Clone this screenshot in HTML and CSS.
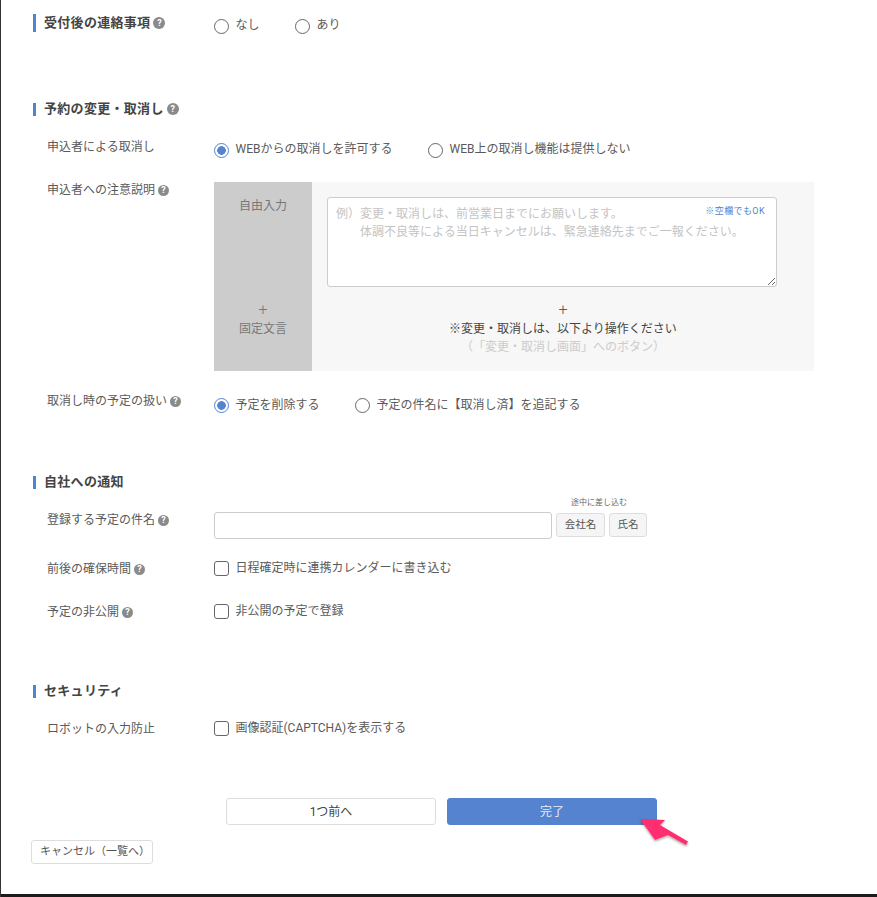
FILE: index.html
```html
<!DOCTYPE html>
<html lang="ja">
<head>
<meta charset="utf-8">
<title>予約フォーム設定</title>
<link rel="stylesheet" href="styles.css">
</head>
<body>
<div class="page">
  <main class="main">
    <section class="section section-first">
      <div class="row-heading">
        <h2 class="heading heading-tall">受付後の連絡事項<span class="help">?</span></h2>
        <div class="options options-inline">
          <label class="option option-narrow"><input class="radio" type="radio" name="contact"><span>なし</span></label>
          <label class="option"><input class="radio" type="radio" name="contact"><span>あり</span></label>
        </div>
      </div>
    </section>

    <section class="section section-cancel">
      <h2 class="heading">予約の変更・取消し<span class="help">?</span></h2>
      <div class="row">
        <div class="label">申込者による取消し</div>
        <div class="options">
          <label class="option option-wide"><input class="radio" type="radio" name="cancel" checked><span>WEBからの取消しを許可する</span></label>
          <label class="option"><input class="radio" type="radio" name="cancel"><span>WEB上の取消し機能は提供しない</span></label>
        </div>
      </div>
      <div class="row row-panel">
        <div class="label">申込者への注意説明<span class="help">?</span></div>
        <div class="panel">
          <div class="panel-side">自由入力</div>
          <div class="panel-main panel-editor">
            <div class="editor">
              <textarea class="textarea" placeholder="例）変更・取消しは、前営業日までにお願いします。&#10;　　体調不良等による当日キャンセルは、緊急連絡先までご一報ください。"></textarea>
              <span class="note">※空欄でもOK</span>
            </div>
          </div>
          <div class="panel-side panel-side-fixed"><span class="plus">+</span>固定文言</div>
          <div class="panel-main panel-fixed">
            <span class="plus">+</span>
            <span class="fixed-text">※変更・取消しは、以下より操作ください</span>
            <span class="fixed-muted">（「変更・取消し画面」へのボタン）</span>
          </div>
        </div>
      </div>
      <div class="row">
        <div class="label">取消し時の予定の扱い<span class="help">?</span></div>
        <div class="options options-low">
          <label class="option option-mid"><input class="radio" type="radio" name="event" checked><span>予定を削除する</span></label>
          <label class="option"><input class="radio" type="radio" name="event"><span>予定の件名に【取消し済】を追記する</span></label>
        </div>
      </div>
    </section>

    <section class="section section-notice">
      <h2 class="heading">自社への通知</h2>
      <div class="row row-title">
        <div class="label">登録する予定の件名<span class="help">?</span></div>
        <div class="title-field">
          <input class="text-input" type="text">
          <div class="inserts">
            <span class="insert-hint">途中に差し込む</span>
            <button class="insert insert-company" type="button">会社名</button>
            <button class="insert insert-name" type="button">氏名</button>
          </div>
        </div>
      </div>
      <div class="row">
        <div class="label">前後の確保時間<span class="help">?</span></div>
        <label class="check"><input class="checkbox" type="checkbox"><span>日程確定時に連携カレンダーに書き込む</span></label>
      </div>
      <div class="row">
        <div class="label">予定の非公開<span class="help">?</span></div>
        <label class="check"><input class="checkbox" type="checkbox"><span>非公開の予定で登録</span></label>
      </div>
    </section>

    <section class="section section-security">
      <h2 class="heading">セキュリティ</h2>
      <div class="row">
        <div class="label">ロボットの入力防止</div>
        <label class="check"><input class="checkbox" type="checkbox"><span>画像認証(CAPTCHA)を表示する</span></label>
      </div>
    </section>

    <div class="actions">
      <button class="btn" type="button">1つ前へ</button>
      <button class="btn btn-primary" type="button">完了</button>
    </div>
    <button class="cancel" type="button">キャンセル（一覧へ）</button>
  </main>
  <div class="bottom-bar"></div>
  <svg class="arrow" width="60" height="40" viewBox="0 0 60 40" aria-hidden="true">
    <defs>
      <filter id="arrow-shadow" x="-20%" y="-20%" width="140%" height="150%">
        <feDropShadow dx="0" dy="1.5" stdDeviation="1.2" flood-color="#000" flood-opacity="0.35"/>
      </filter>
    </defs>
    <path d="M2 2 L27 3 L22 8 L50 24.500 L48 28 L30 18 L17 23 Z" fill="#ff2d6f" filter="url(#arrow-shadow)"/>
  </svg>
</div>
</body>
</html>
```

FILE: styles.css
```css
* {
  box-sizing: border-box;
}

html,
body {
  margin: 0;
  height: 100%;
}

body {
  background: #fff;
  color: #5a5a5a;
  font-family: Roboto, "Noto Sans CJK JP", sans-serif;
  font-size: 12px;
  line-height: 18px;
  overflow: hidden;
  text-spacing-trim: space-all;
}

.page {
  position: relative;
  display: flex;
  flex-direction: column;
  height: 897px;
  border-left: 1px solid #333;
}

.main {
  flex: 1;
  padding: 14px 0 0 32px;
}

.bottom-bar {
  height: 3px;
  background: #1c1c1c;
}

.section-cancel {
  margin-top: 66px;
}

.section-notice {
  margin-top: 39px;
}

.section-security {
  margin-top: 37px;
}

.row-heading {
  display: flex;
}

.heading {
  position: relative;
  display: flex;
  align-items: center;
  margin: 0 0 19px;
  height: 18px;
  padding-left: 11px;
  font-size: 13px;
  font-weight: 700;
  color: #444;
  letter-spacing: 0.3px;
}

.heading::before {
  content: "";
  position: absolute;
  left: 0;
  top: 3px;
  width: 3px;
  height: 13px;
  background: #4d86d0;
}

.heading-tall {
  width: 181px;
  margin-bottom: 0;
}

.heading-tall::before {
  top: 0;
  height: 18px;
}

.help {
  display: inline-block;
  flex: none;
  width: 11px;
  height: 11px;
  margin-left: 3px;
  border-radius: 50%;
  background: #8a8a8a;
  color: #fff;
  font-size: 9px;
  font-weight: 700;
  line-height: 11px;
  text-align: center;
  letter-spacing: 0;
  vertical-align: 1px;
}

.heading .help {
  width: 12px;
  height: 12px;
  line-height: 12px;
}

.row {
  display: flex;
  min-height: 43px;
}

.row-panel {
  margin-bottom: 20px;
}

.row-title {
  min-height: 49px;
}

.label {
  flex: none;
  width: 181px;
  padding-left: 14px;
  padding-top: 1px;
}

.options {
  display: flex;
  padding-top: 3px;
}

.options-inline {
  padding-top: 2px;
}

.options-low {
  padding-top: 4px;
}

.option,
.check {
  display: flex;
  align-items: flex-start;
  gap: 6.500px;
  cursor: pointer;
}

.option-narrow {
  width: 81px;
}

.option-wide {
  width: 214px;
}

.option-mid {
  width: 141px;
}

.options-low span {
  margin-top: 1px;
}

.check {
  align-self: flex-start;
  margin-top: -1px;
}

.check span {
  margin-top: 1px;
}

.radio,
.checkbox {
  appearance: none;
  flex: none;
  width: 15px;
  height: 15px;
  margin: 3px 0 0;
  background: #fff;
  border: 1px solid #666;
}

.radio {
  border-radius: 50%;
}

.radio:checked {
  border-color: #5583cf;
  background: radial-gradient(circle, #5583cf 0, #5583cf 4px, #fff 4.6px);
}

.checkbox {
  border-radius: 3px;
}

.panel {
  display: grid;
  grid-template-columns: 98px 502px;
  grid-template-rows: 119px 70px;
  margin-top: 2px;
  align-self: flex-start;
  background: #f7f7f7;
}

.panel-side {
  padding-top: 15px;
  background: #ccc;
  color: #777;
  text-align: center;
}

.panel-side-fixed {
  display: flex;
  flex-direction: column;
  padding-top: 1px;
}

.panel-main {
  padding: 15px;
}

.panel-fixed {
  display: flex;
  flex-direction: column;
  align-items: center;
  padding: 1px 0 0;
}

.editor {
  position: relative;
  width: 450px;
  height: 90px;
}

.textarea {
  display: block;
  width: 450px;
  height: 90px;
  padding: 7px 8px;
  border: 1px solid #ccc;
  border-radius: 3px;
  background: #fff;
  color: #555;
  font: inherit;
  line-height: 18px;
  resize: both;
  outline: none;
}

.textarea::placeholder {
  color: #c4c4c4;
  opacity: 1;
}

.note {
  position: absolute;
  top: 5px;
  right: 12px;
  color: #5583cf;
  font-size: 9px;
  line-height: 18px;
  letter-spacing: 0.4px;
}

.plus {
  margin: -1px 0 1px;
  font-size: 16px;
  font-weight: 300;
}

.fixed-text {
  color: #444;
}

.fixed-muted {
  color: #ccc;
}

.title-field {
  display: flex;
  align-items: flex-start;
  gap: 4px;
  margin-top: 2px;
}

.text-input {
  width: 338px;
  height: 27px;
  border: 1px solid #ccc;
  border-radius: 3px;
  background: #fff;
  outline: none;
}

.inserts {
  position: relative;
  display: flex;
  gap: 4px;
  margin-top: 1px;
}

.insert-hint {
  position: absolute;
  top: -16px;
  left: 15px;
  color: #666;
  font-size: 8px;
  line-height: 12px;
  white-space: nowrap;
}

.insert {
  height: 24px;
  padding: 0;
  border: 1px solid #ddd;
  border-radius: 3px;
  background: #f5f5f5;
  color: #555;
  font: inherit;
  font-size: 10.500px;
}

.insert-company {
  width: 49px;
}

.insert-name {
  width: 38px;
}

.actions {
  display: flex;
  gap: 11px;
  margin-top: 36px;
  padding-left: 193px;
}

.btn {
  width: 210px;
  height: 27px;
  padding: 0;
  border: 1px solid #ddd;
  border-radius: 3px;
  background: #fff;
  color: #444;
  font: inherit;
}

.btn-primary {
  border-color: #5583cf;
  background: #5583cf;
  color: #e6edf9;
}

.cancel {
  display: block;
  width: 122px;
  height: 24px;
  margin: 15px 0 0 -2px;
  padding: 0 0 0 8px;
  border: 1px solid #ddd;
  border-radius: 3px;
  background: #fff;
  color: #555;
  font: inherit;
  font-size: 11px;
  text-align: left;
}

.arrow {
  position: absolute;
  left: 637px;
  top: 817px;
  pointer-events: none;
}
```
